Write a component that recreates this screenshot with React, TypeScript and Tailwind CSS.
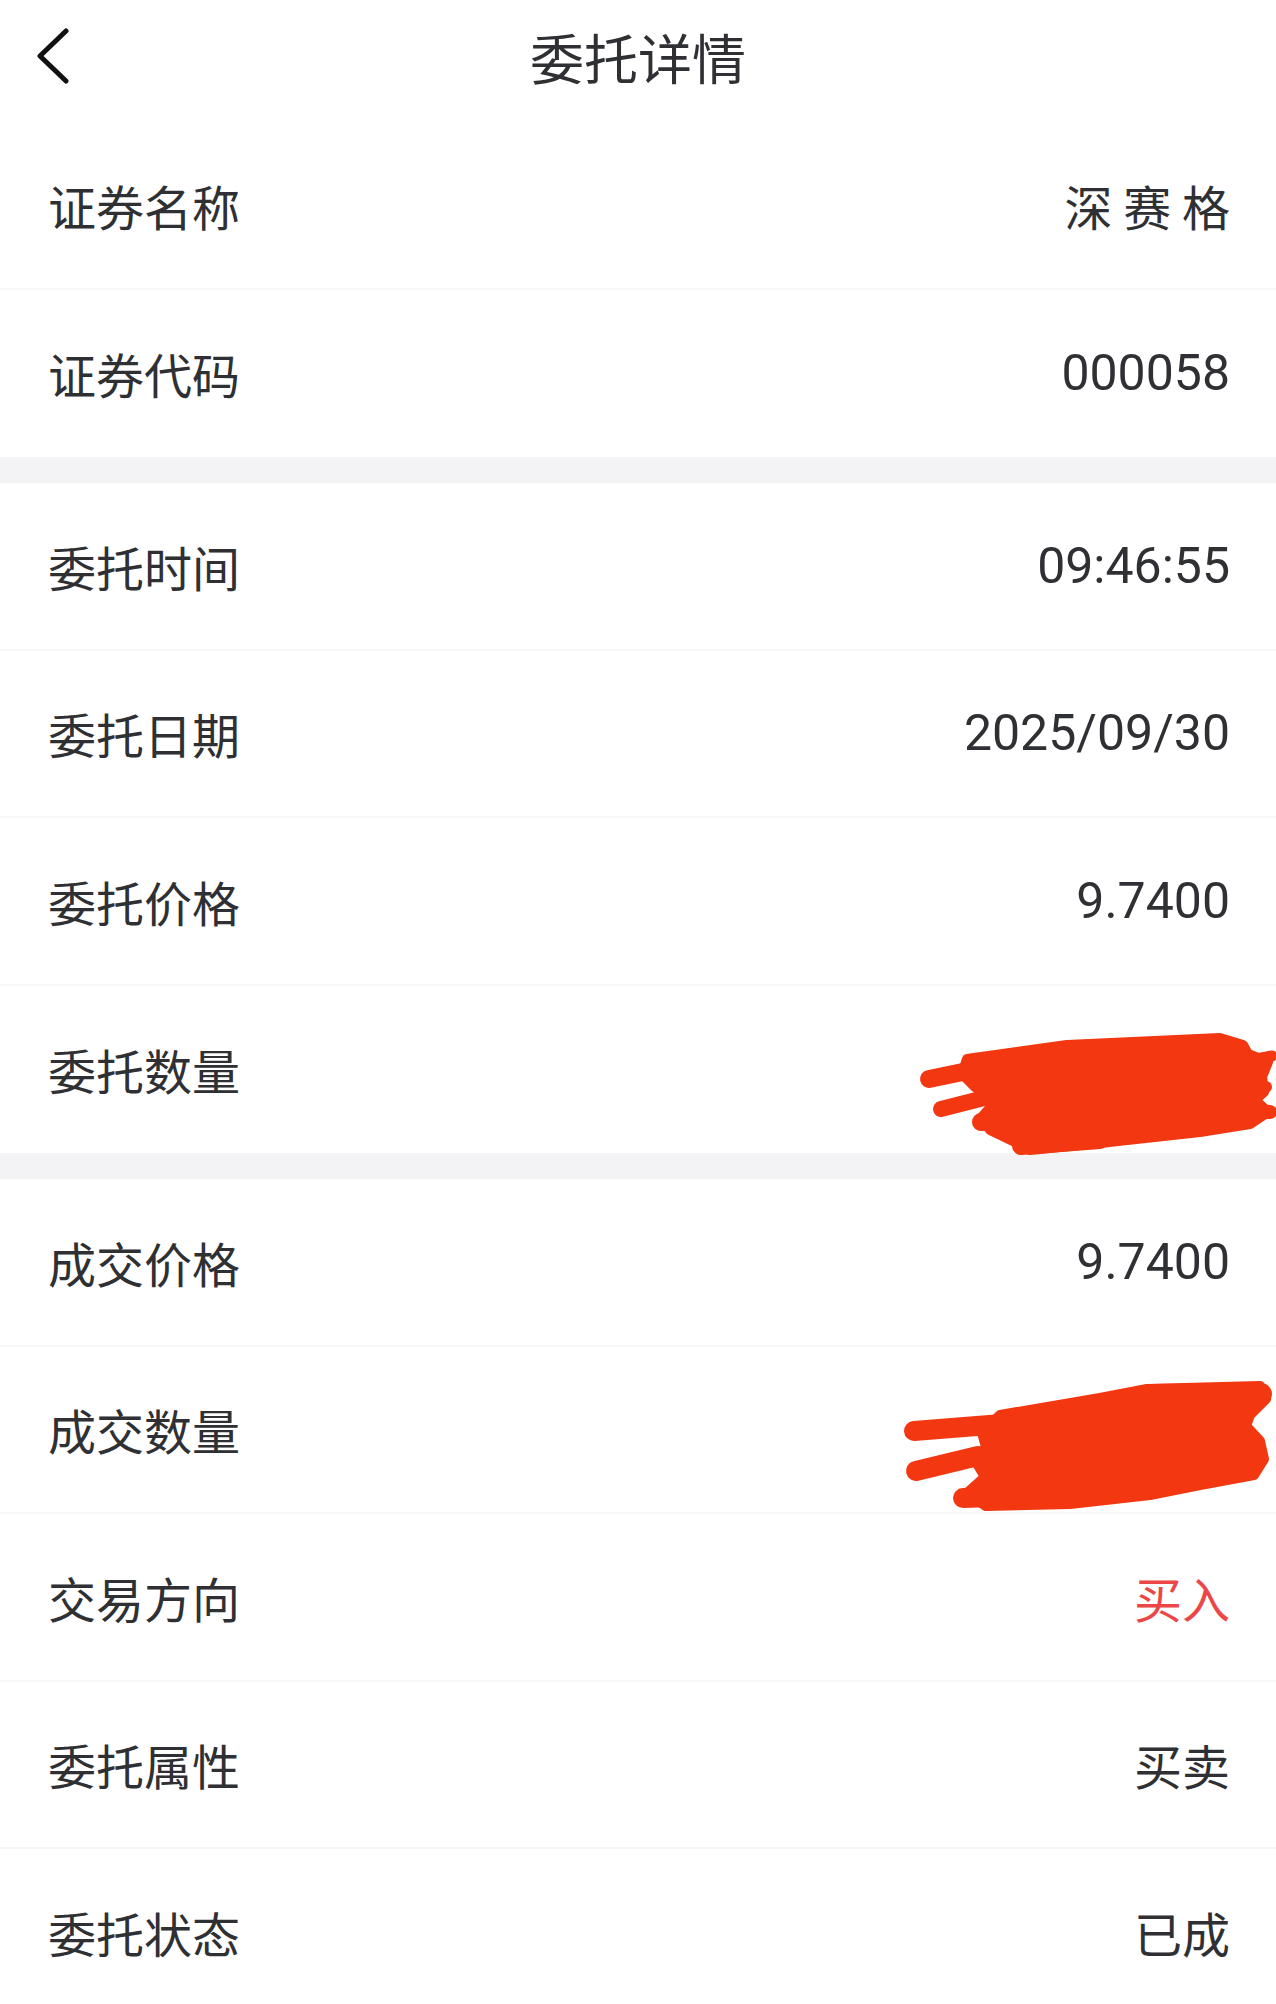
import React from "react";
import type { FC, ReactNode } from "react";

interface Row {
  label: string;
  value?: string;
  tone?: "red";
  scribble?: "a" | "b";
}

const sections: Row[][] = [
  [
    { label: "证券名称", value: "深 赛 格" },
    { label: "证券代码", value: "000058" },
  ],
  [
    { label: "委托时间", value: "09:46:55" },
    { label: "委托日期", value: "2025/09/30" },
    { label: "委托价格", value: "9.7400" },
    { label: "委托数量", scribble: "a" },
  ],
  [
    { label: "成交价格", value: "9.7400" },
    { label: "成交数量", scribble: "b" },
    { label: "交易方向", value: "买入", tone: "red" },
    { label: "委托属性", value: "买卖" },
    { label: "委托状态", value: "已成" },
  ],
];

const RED = "#f23711";

// hand-drawn redaction marks, coords are in page pixels
const ScribbleA: FC = () => (
  <svg
    className="absolute left-[900px] top-[40px] overflow-visible"
    width="376"
    height="135"
    viewBox="900 1024 376 135"
  >
    <g fill="none" stroke={RED} strokeLinecap="round" strokeLinejoin="round">
      <path
        d="M967 1057 L1067 1043 L1220 1036 L1243 1043 L1248 1052 L1268 1060 L1262 1075 L1264 1090 L1255 1098 L1268 1110 L1250 1122 L1200 1130 L1100 1141 L1030 1148 L1015 1140 L990 1128 L982 1115 L995 1100 L975 1085 L962 1072 Z"
        fill={RED}
        strokeWidth="10"
      />
      <path d="M929 1077 L982 1066" strokeWidth="18" />
      <path d="M941 1107 L992 1094" strokeWidth="16" />
      <path d="M981 1120 L1040 1117" strokeWidth="18" />
      <path d="M1021 1144 L1100 1138" strokeWidth="18" />
      <path d="M1240 1060 L1272 1054" strokeWidth="11" />
      <path d="M1240 1086 L1266 1085" strokeWidth="12" />
      <path d="M1238 1108 L1270 1110" strokeWidth="14" />
    </g>
  </svg>
);

const ScribbleB: FC = () => (
  <svg
    className="absolute left-[900px] top-[30px] overflow-visible"
    width="376"
    height="140"
    viewBox="900 1376 376 140"
  >
    <g fill="none" stroke={RED} strokeLinecap="round" strokeLinejoin="round">
      <path
        d="M1000 1414 L1100 1397 L1147 1388 L1260 1385 L1266 1398 L1250 1414 L1246 1425 L1260 1440 L1264 1458 L1254 1474 L1200 1484 L1150 1494 L1070 1503 L986 1505 L967 1492 L985 1476 L976 1461 L986 1446 L982 1432 Z"
        fill={RED}
        strokeWidth="10"
      />
      <path d="M914 1430 L1002 1423" strokeWidth="20" />
      <path d="M916 1470 L978 1455" strokeWidth="20" />
      <path d="M963 1497 L1060 1494" strokeWidth="20" />
      <path d="M1152 1394 L1261 1393" strokeWidth="22" />
      <path d="M1150 1490 L1200 1480" strokeWidth="14" />
    </g>
  </svg>
);

const Line: FC<{ row: Row; last: boolean }> = ({ row, last }) => {
  let value: ReactNode = null;
  if (row.value) {
    const digits = /^[0-9.:/]+$/.test(row.value);
    value = (
      <span
        className={
          (digits
            ? "font-['Roboto','Noto_Sans_CJK_SC',sans-serif] text-[50px] "
            : "text-[48px] ") + (row.tone === "red" ? "text-[#ec4646]" : "text-[#2f3034]")
        }
      >
        {row.value}
      </span>
    );
  }
  return (
    <div
      className={
        "relative flex h-[167.5px] items-center justify-between bg-white pl-[48px] pr-[46px] " +
        (last ? "" : "border-b-2 border-[#f6f6f7]")
      }
    >
      <span className="text-[48px] text-[#2f3034]">{row.label}</span>
      {value}
      {row.scribble === "a" && <ScribbleA />}
      {row.scribble === "b" && <ScribbleB />}
    </div>
  );
};

const App: FC = () => {
  return (
    <div className="h-[2004px] overflow-hidden bg-white font-['Noto_Sans_CJK_SC','Noto_Sans',sans-serif] leading-none">
      <header className="grid h-[122px] grid-cols-[1fr_auto_1fr] items-center bg-white pb-[8px]">
        <div className="pl-[36px]">
          <svg width="36" height="56" viewBox="0 0 36 56" className="-mt-[2px]">
            <polyline
              points="30,3 4,28 30,53"
              fill="none"
              stroke="#111"
              strokeWidth="5"
              strokeLinecap="round"
              strokeLinejoin="round"
            />
          </svg>
        </div>
        <h1 className="text-[54px] font-normal text-[#2f3034]">委托详情</h1>
        <div />
      </header>
      {sections.map((rows, i) => (
        <section key={i}>
          {i > 0 && <div className="h-[26px] bg-[#f3f3f5]" />}
          {rows.map((row, j) => (
            <Line key={row.label} row={row} last={j === rows.length - 1 && i < sections.length - 1} />
          ))}
        </section>
      ))}
    </div>
  );
};

export default App;
